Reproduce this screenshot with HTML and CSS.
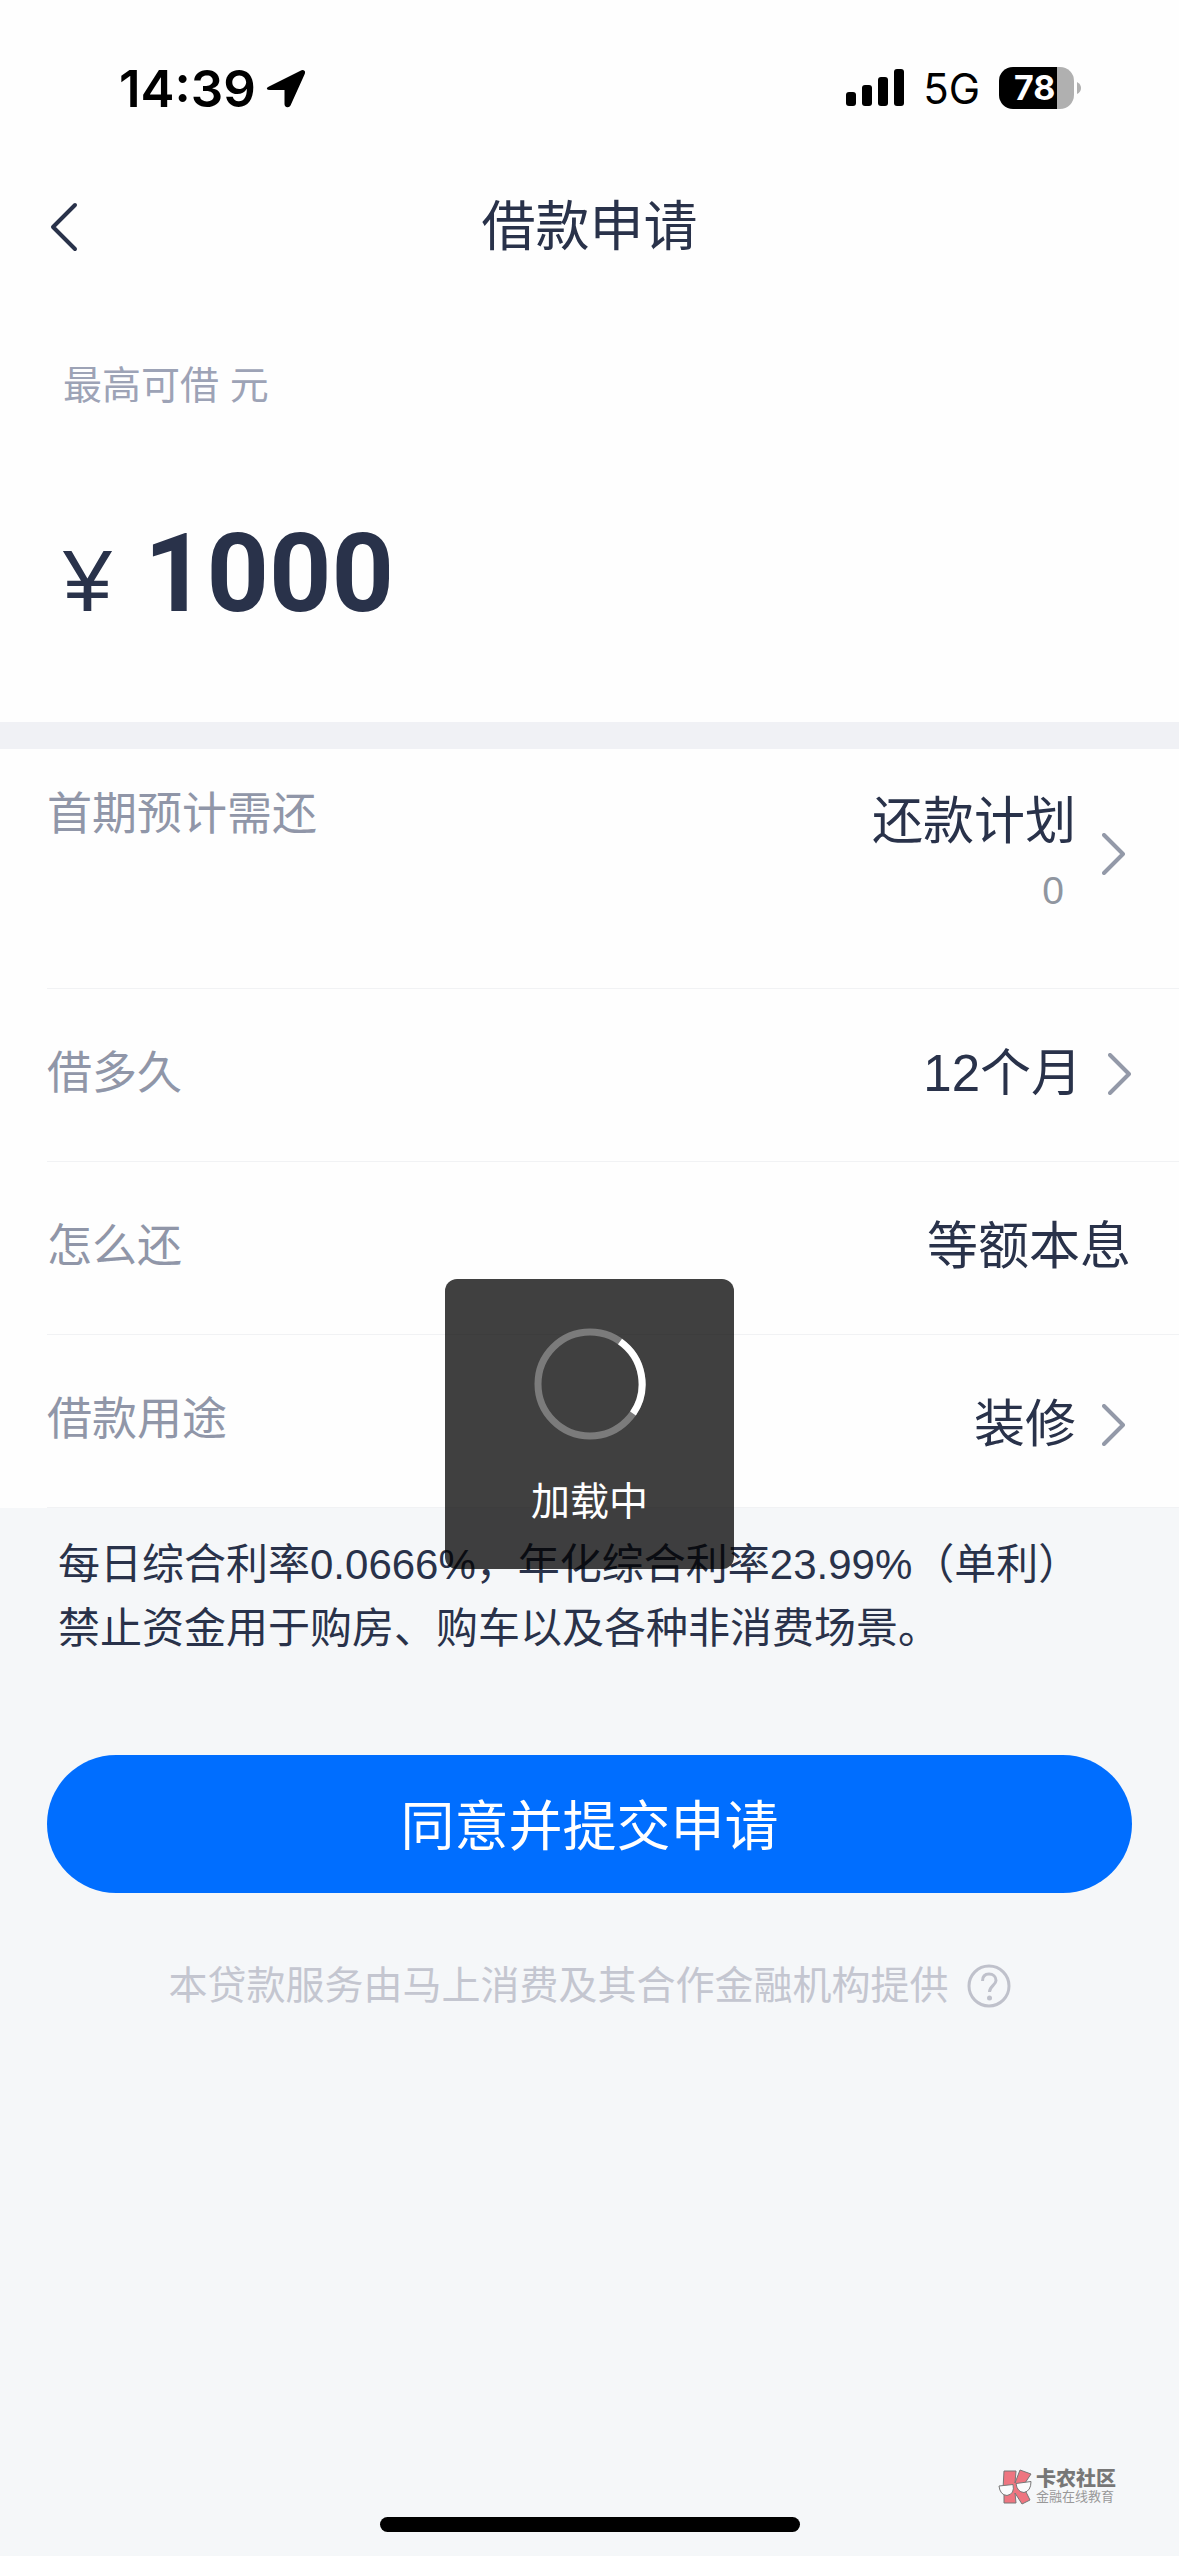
FILE: index.html
```
<!DOCTYPE html>
<html lang="zh-CN">
<head>
<meta charset="utf-8">
<meta name="viewport" content="width=device-width">
<title>借款申请</title>
<link rel="stylesheet" href="styles.css">
</head>
<body>
<div class="status-bar">
  <div class="status-group">
    <span class="clock">14:39</span>
    <svg class="location" viewBox="0 0 40 40" aria-hidden="true"><path d="M3 18.500 35.500 2.200Q38 1.200 39 3.500 39.300 4.800 38.500 6.500L24.500 37.500Q23.500 39.500 21.500 39.300 18.500 39 18.500 36V22H4Q1 22 .8 20.500 .8 19.500 3 18.500Z"/></svg>
  </div>
  <div class="status-group status-group--right">
    <svg class="signal" viewBox="0 0 58 38" aria-hidden="true"><rect y="23" width="10" height="14" rx="3"/><rect x="16" y="16" width="10" height="21" rx="3"/><rect x="32" y="8" width="10" height="29" rx="3"/><rect x="48" width="10" height="37" rx="3"/></svg>
    <span class="network">5G</span>
    <div class="battery"><span class="battery-level">78</span><svg class="battery-tip" viewBox="0 0 4 12" aria-hidden="true"><path d="M0 0Q4 2 4 6T0 12Z"/></svg></div>
  </div>
</div>

<header class="nav">
  <button class="back" type="button" aria-label="返回"><svg viewBox="0 0 28 50" aria-hidden="true"><path d="M25 3 3 25 25 47"/></svg></button>
  <h1 class="nav-title">借款申请</h1>
</header>

<main class="content">
  <section class="amount">
    <p class="amount-label">最高可借 元</p>
    <p class="amount-value"><span class="currency">¥</span><strong class="figure">1000</strong></p>
  </section>

  <section class="details">
    <div class="row row--tall">
      <span class="row-label">首期预计需还</span>
      <button class="row-value" type="button">
        <span class="stack">还款计划<small class="sub-value">0</small></span>
        <svg class="chevron" viewBox="0 0 24 42" aria-hidden="true"><path d="M2 2 21 21 2 40"/></svg>
      </button>
    </div>
    <div class="row">
      <span class="row-label">借多久</span>
      <button class="row-value row-value--spaced" type="button">12个月
        <svg class="chevron" viewBox="0 0 24 42" aria-hidden="true"><path d="M2 2 21 21 2 40"/></svg>
      </button>
    </div>
    <div class="row">
      <span class="row-label">怎么还</span>
      <span class="row-value row-value--plain">等额本息</span>
    </div>
    <div class="row">
      <span class="row-label">借款用途</span>
      <button class="row-value row-value--purpose" type="button">装修
        <svg class="chevron" viewBox="0 0 24 42" aria-hidden="true"><path d="M2 2 21 21 2 40"/></svg>
      </button>
    </div>
  </section>

  <p class="notice">每日综合利率0.0666%，年化综合利率23.99%（单利）<br>禁止资金用于购房、购车以及各种非消费场景。</p>
  <button class="submit" type="button">同意并提交申请</button>
  <p class="provider">本贷款服务由马上消费及其合作金融机构提供
    <button class="help" type="button" aria-label="说明"><svg viewBox="0 0 44 44" aria-hidden="true"><circle cx="22" cy="22" r="20"/><path d="M15.500 17C15.500 12.500 18 10 22 10S29 12.500 29 16.500C29 21 22.500 22 22.500 28"/><circle class="dot" cx="22.500" cy="34" r="2.500"/></svg></button>
  </p>
</main>

<div class="home-indicator"></div>

<div class="watermark">
  <svg class="watermark-logo" viewBox="0 0 35 36" aria-hidden="true">
    <path class="letter" d="M6 2H18L17 14 22 1 33 5 25 17 32 31 24 35 17 24 18 34H6V20H5Z"/>
    <path class="lens" d="M1 17 15 15.500Q17 25 9 26.500 2 26 1 17ZM18 14.500 33 12.500Q33 22 26 23.500 19 23 18 14.500Z"/>
  </svg>
  <div class="watermark-text"><b class="watermark-name">卡农社区</b><span class="watermark-tag">金融在线教育</span></div>
</div>

<div class="overlay">
  <div class="toast" role="status">
    <svg class="spinner" viewBox="0 0 112 112" aria-hidden="true"><circle class="track" cx="56" cy="56" r="52"/><path class="arc" d="M86 13.500A52 52 0 0 1 99 85.500"/></svg>
    <span>加载中</span>
  </div>
</div>
</body>
</html>
```
FILE: styles.css
```
* {
  box-sizing: border-box;
}

body {
  display: flex;
  flex-direction: column;
  min-height: 100vh;
  margin: 0;
  background: #f5f7f9;
  color: #29324a;
  font-family: "Liberation Sans", "Noto Sans CJK SC", sans-serif;
}

p,
h1 {
  margin: 0;
}

button {
  padding: 0;
  border: 0;
  background: none;
  color: inherit;
  font: inherit;
}

svg {
  display: block;
  flex: none;
}

/* Status bar */
.status-bar {
  display: flex;
  align-items: center;
  justify-content: space-between;
  height: 176px;
  padding: 0 98px 0 119px;
  background: #fefefe;
  color: #000;
  font-family: Inter, sans-serif;
}

.status-group {
  display: flex;
  align-items: center;
  gap: 10px;
}

.status-group--right {
  gap: 19px;
}

.clock {
  font-size: 51px;
  font-weight: 600;
}

.location {
  width: 40px;
  height: 40px;
}

.signal {
  width: 58px;
  height: 38px;
}

.network {
  font-size: 42px;
}

.battery {
  display: flex;
  align-items: center;
  gap: 3px;
}

.battery-level {
  width: 75px;
  height: 42px;
  padding-left: 15px;
  border-radius: 14px;
  background: linear-gradient(90deg, #000 78%, #b0b0b0 78%);
  color: #fff;
  font-size: 34px;
  font-weight: 700;
  line-height: 42px;
}

.battery-tip {
  width: 4px;
  height: 12px;
  fill: #b0b0b0;
}

/* Title bar */
.nav {
  display: grid;
  grid-template-columns: 1fr auto 1fr;
  align-items: center;
  height: 102px;
  padding: 0 50px;
  background: #fefefe;
}

.back {
  justify-self: start;
}

.back svg {
  width: 28px;
  height: 50px;
  fill: none;
  stroke: #29324a;
  stroke-width: 4;
  stroke-linecap: round;
  stroke-linejoin: round;
}

.nav-title {
  font-size: 54px;
  font-weight: 400;
  line-height: 80px;
}

/* Amount */
.amount {
  padding: 78px 60px 71px 63px;
  border-bottom: 27px solid #f0f1f5;
  background: #fefefe;
}

.amount-label {
  color: #9da3b6;
  font-size: 39px;
  line-height: 60px;
}

.amount-value {
  display: flex;
  align-items: baseline;
  gap: 32px;
  margin-top: 88px;
  line-height: 140px;
}

.currency {
  font-size: 88px;
}

.figure {
  font-family: Roboto, sans-serif;
  font-size: 109px;
  font-weight: 700;
}

/* Loan details */
.details {
  padding-left: 47px;
  background: #fefefe;
}

.row {
  display: flex;
  align-items: center;
  justify-content: space-between;
  height: 173px;
  padding-bottom: 2px;
  border-bottom: 1px solid #f1f2f4;
}

.row--tall {
  align-items: flex-start;
  height: 240px;
  padding-top: 36px;
}

.row-label {
  color: #9096a8;
  font-size: 45px;
  line-height: 60px;
}

.row-value {
  display: flex;
  align-items: center;
  gap: 26px;
  padding-right: 53px;
  font-size: 51px;
  line-height: 74px;
  text-align: right;
}

.row-value--spaced {
  padding-right: 47px;
}

.row-value--plain {
  padding-right: 48px;
}

.row-value--purpose {
  padding-top: 10px;
}

.stack {
  display: flex;
  flex-direction: column;
}

.sub-value {
  padding-right: 12px;
  color: #9096a0;
  font-size: 39px;
  line-height: 64px;
}

.chevron {
  width: 24px;
  height: 42px;
  fill: none;
  stroke: #9399a8;
  stroke-width: 4;
  stroke-linecap: round;
  stroke-linejoin: round;
}

/* Terms and submit */
.notice {
  padding: 25px 58px 0;
  font-size: 42px;
  line-height: 64px;
}

.submit {
  display: block;
  width: calc(100% - 94px);
  height: 138px;
  margin: 94px 47px 0;
  padding-bottom: 4px;
  border-radius: 69px;
  background: #006eff;
  color: #fff;
  font-size: 54px;
}

.provider {
  display: flex;
  align-items: center;
  justify-content: center;
  gap: 18px;
  margin-top: 63px;
  color: #c4c6d0;
  font-size: 39px;
  line-height: 60px;
}

.help svg {
  width: 44px;
  height: 44px;
  fill: none;
  stroke: #bfc1cb;
  stroke-width: 3;
}

.help .dot {
  fill: #bfc1cb;
  stroke: none;
}

.home-indicator {
  width: 420px;
  height: 15px;
  margin: auto auto 24px;
  border-radius: 8px;
  background: #000;
}

/* Watermark */
.watermark {
  position: absolute;
  right: 63px;
  bottom: 51px;
  display: flex;
  align-items: center;
  gap: 3px;
}

.watermark-logo {
  width: 35px;
  height: 36px;
  stroke: #777;
  stroke-width: 1;
}

.letter {
  fill: #ee7580;
}

.lens {
  fill: #fafbfc;
}

.watermark-text {
  display: flex;
  flex-direction: column;
}

.watermark-name {
  color: #777;
  font-size: 20px;
  font-weight: 900;
  line-height: 20px;
}

.watermark-tag {
  color: #999;
  font-size: 13px;
  line-height: 16px;
}

/* Loading toast, centred in the area below the title bar */
.overlay {
  position: absolute;
  inset: 0;
  display: flex;
  align-items: center;
  justify-content: center;
  padding-top: 292px;
}

.toast {
  display: flex;
  flex-direction: column;
  align-items: center;
  gap: 32px;
  width: 289px;
  height: 290px;
  padding-top: 49px;
  border-radius: 12px;
  background: rgba(0, 0, 0, 0.75);
  color: #fff;
  font-size: 39px;
  line-height: 60px;
}

.spinner {
  width: 112px;
  height: 112px;
  fill: none;
  stroke-width: 7;
}

.track {
  stroke: #7b7b7b;
}

.arc {
  stroke: #fff;
}
```
